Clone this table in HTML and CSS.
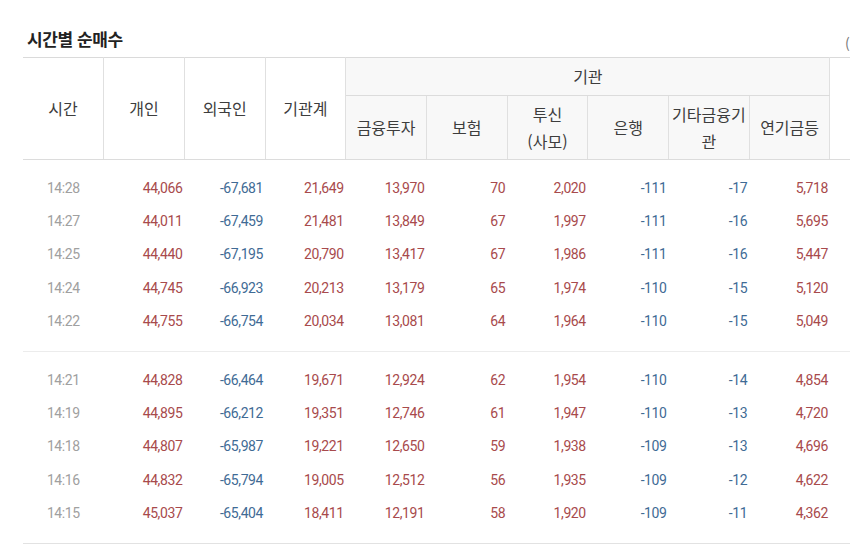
FILE: index.html
```html
<!DOCTYPE html>
<html lang="ko">
<head>
<meta charset="utf-8">
<title>시간별 순매수</title>
<link rel="stylesheet" href="styles.css">
</head>
<body>
<div class="page">
  <div class="title-bar">
    <h2 class="title">시간별 순매수</h2>
    <span class="unit">(단위: 억원)</span>
  </div>
  <table class="grid">
    <colgroup>
      <col class="c"><col class="c"><col class="c"><col class="c"><col class="c">
      <col class="c"><col class="c"><col class="c"><col class="c"><col class="c"><col class="c">
    </colgroup>
    <thead>
      <tr class="h1">
        <th rowspan="2">시간</th>
        <th rowspan="2">개인</th>
        <th rowspan="2">외국인</th>
        <th rowspan="2">기관계</th>
        <th colspan="6" class="shade">기관</th>
        <th rowspan="2" class="last"></th>
      </tr>
      <tr class="h2">
        <th class="shade">금융투자</th>
        <th class="shade">보험</th>
        <th class="shade">투신<br>(사모)</th>
        <th class="shade">은행</th>
        <th class="shade">기타금융기<br>관</th>
        <th class="shade">연기금등</th>
      </tr>
    </thead>
    <tbody>
      <tr class="first"><td class="t">14:28</td><td class="p">44,066</td><td class="n">-67,681</td><td class="p">21,649</td><td class="p">13,970</td><td class="p">70</td><td class="p">2,020</td><td class="n">-111</td><td class="n">-17</td><td class="p">5,718</td><td></td></tr>
      <tr><td class="t">14:27</td><td class="p">44,011</td><td class="n">-67,459</td><td class="p">21,481</td><td class="p">13,849</td><td class="p">67</td><td class="p">1,997</td><td class="n">-111</td><td class="n">-16</td><td class="p">5,695</td><td></td></tr>
      <tr><td class="t">14:25</td><td class="p">44,440</td><td class="n">-67,195</td><td class="p">20,790</td><td class="p">13,417</td><td class="p">67</td><td class="p">1,986</td><td class="n">-111</td><td class="n">-16</td><td class="p">5,447</td><td></td></tr>
      <tr><td class="t">14:24</td><td class="p">44,745</td><td class="n">-66,923</td><td class="p">20,213</td><td class="p">13,179</td><td class="p">65</td><td class="p">1,974</td><td class="n">-110</td><td class="n">-15</td><td class="p">5,120</td><td></td></tr>
      <tr class="end"><td class="t">14:22</td><td class="p">44,755</td><td class="n">-66,754</td><td class="p">20,034</td><td class="p">13,081</td><td class="p">64</td><td class="p">1,964</td><td class="n">-110</td><td class="n">-15</td><td class="p">5,049</td><td></td></tr>
    </tbody>
    <tbody>
      <tr class="first"><td class="t">14:21</td><td class="p">44,828</td><td class="n">-66,464</td><td class="p">19,671</td><td class="p">12,924</td><td class="p">62</td><td class="p">1,954</td><td class="n">-110</td><td class="n">-14</td><td class="p">4,854</td><td></td></tr>
      <tr><td class="t">14:19</td><td class="p">44,895</td><td class="n">-66,212</td><td class="p">19,351</td><td class="p">12,746</td><td class="p">61</td><td class="p">1,947</td><td class="n">-110</td><td class="n">-13</td><td class="p">4,720</td><td></td></tr>
      <tr><td class="t">14:18</td><td class="p">44,807</td><td class="n">-65,987</td><td class="p">19,221</td><td class="p">12,650</td><td class="p">59</td><td class="p">1,938</td><td class="n">-109</td><td class="n">-13</td><td class="p">4,696</td><td></td></tr>
      <tr><td class="t">14:16</td><td class="p">44,832</td><td class="n">-65,794</td><td class="p">19,005</td><td class="p">12,512</td><td class="p">56</td><td class="p">1,935</td><td class="n">-109</td><td class="n">-12</td><td class="p">4,622</td><td></td></tr>
      <tr class="end last-group"><td class="t">14:15</td><td class="p">45,037</td><td class="n">-65,404</td><td class="p">18,411</td><td class="p">12,191</td><td class="p">58</td><td class="p">1,920</td><td class="n">-109</td><td class="n">-11</td><td class="p">4,362</td><td></td></tr>
    </tbody>
  </table>
</div>
</body>
</html>
```

FILE: styles.css
```css
html, body {
  margin: 0;
  padding: 0;
  background: #ffffff;
}
body {
  overflow: hidden;
  font-family: "Noto Sans CJK KR", "Noto Sans", sans-serif;
  color: #444;
}
.page {
  width: 900px;
  padding: 28px 0 0 23px;
}
.title-bar {
  display: flex;
  align-items: flex-end;
  height: 29px;
}
.title {
  margin: 0 0 7px 4px;
  font-size: 17px;
  font-weight: 700;
  letter-spacing: -0.4px;
  color: #222;
  line-height: 22px;
  width: 818px;
}
.unit {
  font-size: 14px;
  color: #777;
  white-space: nowrap;
  line-height: 18px;
  margin-bottom: 5px;
}
.grid {
  border-collapse: collapse;
  table-layout: fixed;
  width: 887px;
}
.grid col.c {
  width: 80.7px;
}
.grid th {
  font-weight: 400;
  font-size: 16px;
  line-height: 27px;
  color: #3d3d3d;
  padding: 0;
  text-align: center;
  vertical-align: middle;
  border-left: 1px solid #e0e0e0;
  border-right: 1px solid #e0e0e0;
  border-bottom: 1px solid #dcdcdc;
}
.grid thead tr.h1 th {
  border-top: 1px solid #dadada;
  height: 37px;
}
.grid thead tr.h2 th {
  height: 63px;
}
.grid thead tr.h1 th:first-child {
  border-left: none;
}
.grid th.shade {
  background: #f8f8f8;
}
.grid th.last {
  border-right: none;
}
.grid td {
  height: 33.4px;
  padding: 0 2px 0 0;
  font-family: Roboto, "Noto Sans", sans-serif;
  font-size: 14px;
  letter-spacing: -0.4px;
  text-align: right;
  vertical-align: middle;
}
.grid tr.first td {
  padding-top: 11px;
}
.grid tr.end td {
  padding-bottom: 13px;
  border-bottom: 1px solid #ececec;
}
.grid tr.last-group td {
  border-bottom: 1px solid #e2e2e2;
}
.grid td.t {
  text-align: center;
  color: #a0a0a0;
  padding-right: 0;
}
.grid td.p {
  color: #a84a4c;
}
.grid td.n {
  color: #3f6b95;
}
```
